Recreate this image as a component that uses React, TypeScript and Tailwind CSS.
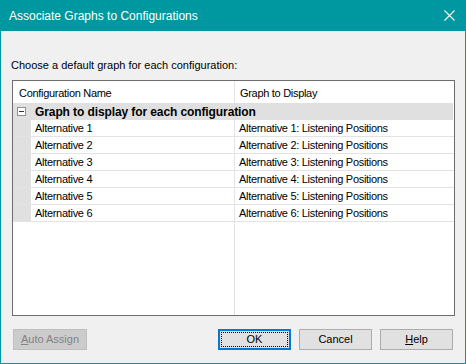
import React from "react";

const rows = [1, 2, 3, 4, 5, 6];

function Btn({
  children,
  variant = "normal",
}: {
  children: React.ReactNode;
  variant?: "normal" | "default" | "disabled";
}) {
  if (variant === "disabled") {
    return (
      <div className="w-[74px] h-[21px] border border-[#bfbfbf] bg-[#cccccc] text-[#838383] flex items-center justify-center text-[11px]">
        {children}
      </div>
    );
  }
  if (variant === "default") {
    return (
      <div className="w-[73px] h-[21px] border-2 border-[#0078d7] bg-[#e1e1e1] p-[1px]">
        <div className="w-full h-full border border-dotted border-black flex items-center justify-center text-[11px] text-black">
          {children}
        </div>
      </div>
    );
  }
  return (
    <div className="w-[73px] h-[21px] border border-[#adadad] bg-[#e1e1e1] flex items-center justify-center text-[11px] text-black">
      {children}
    </div>
  );
}

export default function App() {
  return (
    <div
      className="w-[466px] h-[364px] bg-[#0098a0] flex flex-col px-[1px] pb-[1px]"
      style={{ fontFamily: '"Liberation Sans", Arial, sans-serif' }}
    >
      {/* Title bar */}
      <div className="h-[31px] flex items-center justify-between pl-[8px] pr-[10px] shrink-0">
        <span className="text-white text-[12px] leading-none">
          Associate Graphs to Configurations
        </span>
        <svg width="11" height="11" viewBox="0 0 11 11" className="mt-[0px]">
          <path d="M0.5 0.5 L10.5 10.5 M10.5 0.5 L0.5 10.5" stroke="#ffffff" strokeWidth="1.1" />
        </svg>
      </div>

      {/* Body */}
      <div className="flex-1 bg-[#f0f0f0] flex flex-col">
        <div className="mt-[28px] ml-[10px] h-[13px] leading-[13px] text-[11px] text-black">
          Choose a default graph for each configuration:
        </div>

        {/* Grid */}
        <div className="mt-[8px] ml-[11px] w-[443px] h-[236px] border border-[#6d6d6d] bg-white flex flex-col text-[11px] tracking-[-0.3px] text-black">
          {/* header */}
          <div className="h-[22px] flex shrink-0">
            <div className="w-[222px] border-r border-[#e3e3e3] pl-[6px] pt-[2px] flex items-center">
              Configuration Name
            </div>
            <div className="flex-1 pl-[5px] pt-[2px] flex items-center">Graph to Display</div>
          </div>
          {/* group row */}
          <div className="h-[17px] bg-[#e0e0e0] flex items-center shrink-0 mr-[1px]">
            <div className="ml-[4px] w-[9px] h-[9px] border border-[#8f8f8f] bg-white flex items-center justify-center">
              <div className="w-[5px] h-[1px] bg-[#333333]" />
            </div>
            <span className="ml-[9px] font-bold text-[12px] tracking-[-0.1px]">
              Graph to display for each configuration
            </span>
          </div>
          {/* rows */}
          {rows.map((n) => (
            <div key={n} className="h-[17px] flex border-b border-[#e3e3e3] shrink-0">
              <div className="w-[18px] bg-[#e0e0e0]" />
              <div className="w-[204px] border-r border-[#e3e3e3] pl-[4px] flex items-center">
                Alternative {n}
              </div>
              <div className="flex-1 pl-[4px] flex items-center">
                Alternative {n}: Listening Positions
              </div>
            </div>
          ))}
          {/* filler */}
          <div className="flex-1 flex">
            <div className="w-[222px] border-r border-[#e3e3e3]" />
            <div className="flex-1" />
          </div>
        </div>

        {/* Buttons */}
        <div className="mt-[13px] flex items-center ml-[12px] mr-[12px]">
          <Btn variant="disabled">
            <span>
              <span className="underline">A</span>uto Assign
            </span>
          </Btn>
          <div className="flex-1" />
          <div className="flex gap-[8px]">
            <Btn variant="default">OK</Btn>
            <Btn>Cancel</Btn>
            <Btn>
              <span>
                <span className="underline">H</span>elp
              </span>
            </Btn>
          </div>
        </div>
      </div>
    </div>
  );
}
